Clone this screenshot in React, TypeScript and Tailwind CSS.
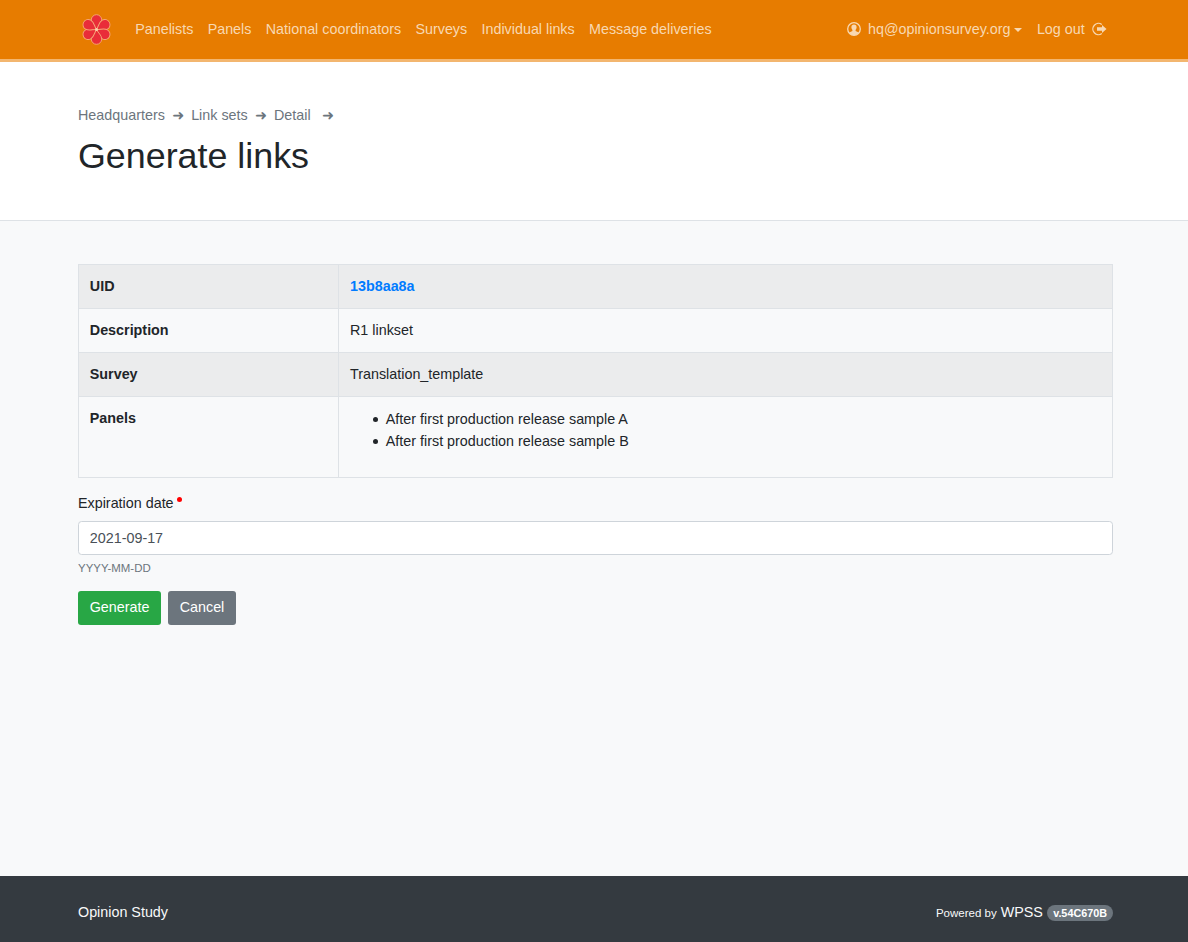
import React from "react";

const navItems = ["Panelists", "Panels", "National coordinators", "Surveys", "Individual links", "Message deliveries"];
const panels = ["After first production release sample A", "After first production release sample B"];
const crumbs = [
  { label: "Headquarters", gap: "mr-[7.3px]" },
  { label: "Link sets", gap: "mr-[7.3px]" },
  { label: "Detail", gap: "mr-[11.4px]" },
];
const petals = [0, 60, 120, 180, 240, 300];

function Flower() {
  return (
    <svg width="32" height="32" viewBox="-15.5 -15.5 32 32" className="block">
      {petals.map((a) => (
        <path
          key={a}
          transform={`rotate(${a})`}
          d="M0 0 C-1.5 -3.4 -5.2 -5.4 -5.2 -9.6 A5.2 5.2 0 0 1 5.2 -9.6 C5.2 -5.4 1.5 -3.4 0 0Z"
          fill="#e92d39"
          stroke="#f5a878"
          strokeWidth="0.9"
        />
      ))}
      <circle r="1.5" fill="#fbd0b0" />
    </svg>
  );
}

function UserIcon() {
  return (
    <svg width="14" height="14" viewBox="0 0 14 14" className="block">
      <circle cx="7" cy="7" r="6.3" fill="none" stroke="currentColor" strokeWidth="1.3" />
      <path d="M7 2.6c1.7 0 2.6 1.1 2.6 2.7 0 1.2-.5 2-1 2.6v1.2l3.2 1.4C10.8 12.3 9.1 13.3 7 13.3s-3.8-1-4.8-2.8l3.2-1.4V7.9c-.5-.6-1-1.4-1-2.6 0-1.6.9-2.7 2.6-2.7Z" fill="currentColor" />
    </svg>
  );
}

function LogoutIcon() {
  return (
    <svg width="15" height="14" viewBox="0 0 15 14" className="block">
      <path d="M9.8 2.5A5.6 5.6 0 1 0 9.8 11.5" fill="none" stroke="currentColor" strokeWidth="1.3" />
      <path d="M5 5.2h5V3L14.5 7 10 11V8.8H5Z" fill="currentColor" />
    </svg>
  );
}

const th = "w-[260px] border border-[#dee2e6] px-[10.8px] py-[10.75px] text-left align-top font-bold";
const td = "border border-[#dee2e6] px-[11px] py-[10.75px] align-top";

export default function App() {
  return (
    <div className="flex min-h-screen flex-col bg-[#f8f9fa] font-['Liberation_Sans',Arial,sans-serif] text-[14.34px] leading-[21.5px] text-[#212529]">
      <header className="flex h-[62px] items-center border-b-[3px] border-[#f3b66f] bg-[#e77c00] pr-[81px] pl-[81px] text-[#f8d8b2]">
        <Flower />
        <nav className="ml-[22.2px] flex gap-[14.3px]">
          {navItems.map((item) => (
            <a key={item} href="#">{item}</a>
          ))}
        </nav>
        <div className="ml-auto flex items-center">
          <span className="-mt-px"><UserIcon /></span>
          <a href="#" className="ml-[7px]">hq@opinionsurvey.org</a>
          <span className="ml-[3.4px] border-x-[4px] border-t-[4px] border-x-transparent border-t-current" />
          <a href="#" className="mr-[7.3px] ml-[15px]">Log out</a>
          <span className="-mt-px"><LogoutIcon /></span>
        </div>
      </header>

      <section className="h-[159px] border-b border-[#dee2e6] bg-white pt-[43px] pl-[78px]">
        <div className="flex h-[21px] items-center text-[#6c757d]">
          {crumbs.map((c) => (
            <React.Fragment key={c.label}>
              <a href="#" className={c.gap}>{c.label}</a>
              <span className="mr-[7px] w-[12px] font-['DejaVu_Sans',sans-serif]">➜</span>
            </React.Fragment>
          ))}
        </div>
        <h1 className="mt-[9px] text-[35.84px] leading-[43px]">Generate links</h1>
      </section>

      <main className="flex-1 pt-[43px] pr-[75px] pl-[78px]">
        <table className="w-full table-fixed border-collapse border border-[#dee2e6]">
          <tbody>
            <tr className="bg-[#ebeced]">
              <th className={th}>UID</th>
              <td className={td}><a href="#" className="font-bold text-[#007bff]">13b8aa8a</a></td>
            </tr>
            <tr><th className={th}>Description</th><td className={td}>R1 linkset</td></tr>
            <tr className="bg-[#ebeced]"><th className={th}>Survey</th><td className={td}>Translation_template</td></tr>
            <tr>
              <th className={th}>Panels</th>
              <td className={td}>
                <ul className="mb-[13.5px] pt-px pl-[23px]">
                  {panels.map((p) => (
                    <li key={p} className="flex h-[22px] items-center">
                      <span className="mr-[7.8px] size-[5px] rounded-full bg-[#212529]" />
                      {p}
                    </li>
                  ))}
                </ul>
              </td>
            </tr>
          </tbody>
        </table>
        <form className="mt-[15px]">
          <label className="mb-[7px] flex h-[21px]">
            Expiration date
            <span className="mt-[4px] ml-[3.7px] size-[4.5px] rounded-full bg-[#ff0000]" />
          </label>
          <input
            type="text"
            defaultValue="2021-09-17"
            className="block h-[34px] w-full rounded-[3.6px] border border-[#ced4da] bg-white px-[10.8px] text-[#495057]"
          />
          <small className="mt-[5px] block text-[11.45px] leading-[17px] text-[#6c757d]">YYYY-MM-DD</small>
          <div className="mt-[14px] flex gap-[7px]">
            <button type="button" className="h-[34px] w-[83px] rounded-[3px] bg-[#28a745] pb-px text-white">Generate</button>
            <button type="button" className="h-[34px] w-[68px] rounded-[3px] bg-[#6c757d] pb-px text-white">Cancel</button>
          </div>
        </form>
      </main>

      <footer className="flex h-[66px] items-center justify-between bg-[#343a40] pt-[7px] pr-[75px] pl-[78px] text-[#f8f9fa]">
        <span>Opinion Study</span>
        <div className="flex items-baseline pt-px">
          <small className="text-[11.5px]">Powered by</small>
          <span className="ml-[4px]">WPSS</span>
          <span className="ml-[4.3px] rounded-full bg-[#6c757d] px-[6px] py-[2.5px] text-[10.8px] leading-[11px] font-bold text-white">v.54C670B</span>
        </div>
      </footer>
    </div>
  );
}
